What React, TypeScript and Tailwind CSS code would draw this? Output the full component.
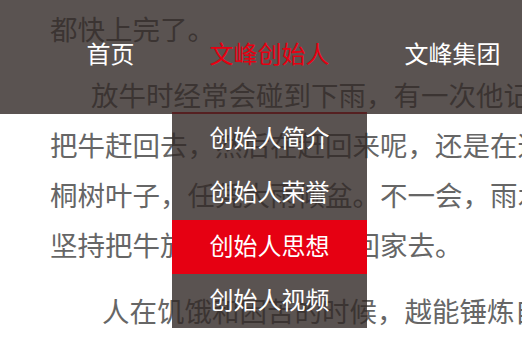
import React from "react";

const navItems = [
  { label: "首页" },
  {
    label: "文峰创始人",
    active: true,
    children: ["创始人简介", "创始人荣誉", "创始人思想", "创始人视频"],
  },
  { label: "文峰集团" },
];

const paragraphs: { indent: string; lines: string[] }[] = [
  { indent: "pl-0", lines: ["都快上完了。"] },
  {
    indent: "pl-[41px]",
    lines: [
      "放牛时经常会碰到下雨，有一次他记得",
      "把牛赶回去，然后在赶回来呢，还是在这",
      "桐树叶子，任凭大雨倾盆。不一会，雨水",
      "坚持把牛放饱了以后才赶回家去。",
    ],
  },
  { indent: "pl-[52px]", lines: ["人在饥饿和困苦的时候，越能锤炼自己"] },
];

function DropMenu({ items }: { items: string[] }) {
  return (
    <div className="absolute left-0 top-full w-full bg-[rgba(49,40,38,0.8)]">
      {items.map((item, idx) => (
        <div
          key={item}
          className={
            "flex h-[54px] items-center justify-center pb-[4px] text-[24px] leading-[24px] text-white " +
            (idx === 2 ? "bg-[#e60012]" : "")
          }
        >
          {item}
        </div>
      ))}
    </div>
  );
}

export default function App() {
  return (
    <div
      className="relative h-[340px] w-[522px] overflow-hidden bg-white"
      style={{ fontFamily: '"Noto Sans CJK SC", "Noto Sans", sans-serif' }}
    >
      <div className="pl-[50px] pt-[3px] text-[27.5px] leading-[50px] text-[#666]">
        {paragraphs.map((p, idx) => (
          <div key={idx} className="mb-[16px]">
            {p.lines.map((line, lineIdx) => (
              <div key={line} className={"whitespace-nowrap " + (lineIdx === 0 ? p.indent : "")}>
                {line}
              </div>
            ))}
          </div>
        ))}
      </div>

      <nav className="absolute left-0 top-0 flex h-[114px] w-full bg-[rgba(49,40,38,0.8)] pl-[49px]">
        {navItems.map((item) => (
          <div
            key={item.label}
            className={
              "relative flex h-full shrink-0 items-center whitespace-nowrap border-b-2 px-[37.5px] pb-[7px] text-[24px] leading-[24px] " +
              (item.active ? "border-[#e60012] text-[#e60012]" : "border-transparent text-white")
            }
          >
            {item.label}
            {item.children ? <DropMenu items={item.children} /> : null}
          </div>
        ))}
      </nav>
    </div>
  );
}
